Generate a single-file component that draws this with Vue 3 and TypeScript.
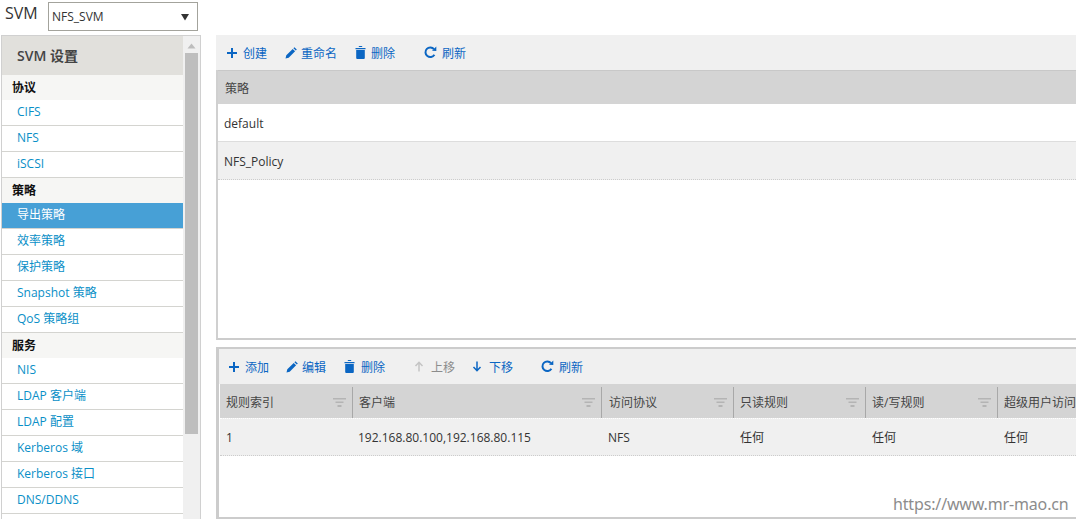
<script setup lang="ts">
type NavRow = { label: string; kind: 'group' | 'item' | 'active' }
const nav: NavRow[] = [
  { label: '协议', kind: 'group' },
  { label: 'CIFS', kind: 'item' },
  { label: 'NFS', kind: 'item' },
  { label: 'iSCSI', kind: 'item' },
  { label: '策略', kind: 'group' },
  { label: '导出策略', kind: 'active' },
  { label: '效率策略', kind: 'item' },
  { label: '保护策略', kind: 'item' },
  { label: 'Snapshot 策略', kind: 'item' },
  { label: 'QoS 策略组', kind: 'item' },
  { label: '服务', kind: 'group' },
  { label: 'NIS', kind: 'item' },
  { label: 'LDAP 客户端', kind: 'item' },
  { label: 'LDAP 配置', kind: 'item' },
  { label: 'Kerberos 域', kind: 'item' },
  { label: 'Kerberos 接口', kind: 'item' },
  { label: 'DNS/DDNS', kind: 'item' },
]
const columns = [
  { title: '规则索引', cell: '1', width: 133, filter: true },
  { title: '客户端', cell: '192.168.80.100,192.168.80.115', width: 249, filter: true },
  { title: '访问协议', cell: 'NFS', width: 132, filter: true },
  { title: '只读规则', cell: '任何', width: 132, filter: true },
  { title: '读/写规则', cell: '任何', width: 132, filter: true },
  { title: '超级用户访问', cell: '任何', width: 132, filter: false },
]
</script>

<template>
  <div class="page">
    <div class="svm-bar">
      <span class="svm-label">SVM</span>
      <div class="select">
        <span>NFS_SVM</span>
        <svg width="10" height="8" viewBox="0 0 10 8"><path d="M1 1h8L5 7.500z" fill="#333" /></svg>
      </div>
    </div>
    <div class="main">
      <aside class="sidebar">
        <div class="nav">
          <div class="nav-head">SVM 设置</div>
          <div v-for="row in nav" :key="row.label" :class="['nav-row', row.kind]">{{ row.label }}</div>
        </div>
        <div class="scrollbar">
          <svg class="scroll-up" width="9" height="6" viewBox="0 0 9 6"><path d="M4.500 0.500 8.500 5.500h-8z" fill="#bdbdbd" /></svg>
          <div class="thumb"></div>
        </div>
      </aside>
      <div class="content">
        <section class="panel top-panel">
          <div class="toolbar top-toolbar">
            <button class="tool t-create"><svg width="12" height="12" viewBox="0 0 12 12"><path d="M6 1v10M1 6h10" class="st" /></svg>创建</button>
            <button class="tool t-rename"><svg width="12" height="12" viewBox="0 0 12 12"><path d="M0.500 11.500l.8-3.200 6.400-6.400 2.400 2.400-6.400 6.400zM8.400 1.200l1-1 2.400 2.400-1 1z" class="fl" /></svg>重命名</button>
            <button class="tool t-del"><svg width="11" height="13" viewBox="0 0 11 13"><path d="M0.500 2h10v1.200h-10zM3.500 1l.7-1h2.600l.7 1zM1.200 4h8.600v8a1 1 0 0 1-1 1H2.200a1 1 0 0 1-1-1z" class="fl" /></svg>删除</button>
            <button class="tool t-refresh"><svg width="14" height="13" viewBox="0 0 14 13"><path d="M10.400 8.700A4.800 4.800 0 1 1 10 3.200" class="st round" /><path d="M8 4.700 12.300 5V.6z" class="fl" /></svg>刷新</button>
          </div>
          <div class="policy-head">策略</div>
          <div class="policy-row first">default</div>
          <div class="policy-row second">NFS_Policy</div>
        </section>
        <section class="panel bottom-panel">
          <div class="toolbar bottom-toolbar">
            <button class="tool t-add"><svg width="12" height="12" viewBox="0 0 12 12"><path d="M6 1v10M1 6h10" class="st" /></svg>添加</button>
            <button class="tool t-edit"><svg width="12" height="12" viewBox="0 0 12 12"><path d="M0.500 11.500l.8-3.200 6.400-6.400 2.400 2.400-6.400 6.400zM8.400 1.200l1-1 2.400 2.400-1 1z" class="fl" /></svg>编辑</button>
            <button class="tool t-del2"><svg width="11" height="13" viewBox="0 0 11 13"><path d="M0.500 2h10v1.200h-10zM3.500 1l.7-1h2.600l.7 1zM1.200 4h8.600v8a1 1 0 0 1-1 1H2.200a1 1 0 0 1-1-1z" class="fl" /></svg>删除</button>
            <button class="tool t-up"><svg width="10" height="11" viewBox="0 0 10 11"><path d="M5 10.500V1.500M1.500 5 5 1.300 8.500 5" class="st thin" /></svg>上移</button>
            <button class="tool t-down"><svg width="10" height="11" viewBox="0 0 10 11"><path d="M5 .5v9M1.500 6 5 9.700 8.500 6" class="st thin" /></svg>下移</button>
            <button class="tool t-refresh"><svg width="14" height="13" viewBox="0 0 14 13"><path d="M10.400 8.700A4.800 4.800 0 1 1 10 3.200" class="st round" /><path d="M8 4.700 12.300 5V.6z" class="fl" /></svg>刷新</button>
          </div>
          <div class="rule-grid">
            <div class="grid-row head">
              <div v-for="c in columns" :key="c.title" class="th" :style="{ width: c.width + 'px' }">
                <span class="th-title">{{ c.title }}</span>
                <svg v-if="c.filter" class="filter" width="13" height="9" viewBox="0 0 13 9"><path d="M0 0h13v1.500H0zM2.500 3.500h8V5h-8zM4.500 7h4v2h-4z" fill="#b4b4b4" /></svg>
              </div>
            </div>
            <div class="grid-row body">
              <div v-for="c in columns" :key="c.title" class="td" :style="{ width: c.width + 'px' }">{{ c.cell }}</div>
            </div>
          </div>
        </section>
      </div>
    </div>
    <div class="watermark">https://www.mr-mao.cn</div>
  </div>
</template>

<style>
html, body { margin: 0; padding: 0; background: #fff; overflow: hidden; }
</style>

<style scoped>
.page {
  position: relative;
  width: 1076px;
  height: 519px;
  overflow: hidden;
  background: #fff;
  font-family: "Open Sans", "Noto Sans CJK SC", sans-serif;
  font-size: 12px;
  color: #333;
}
.svm-bar { display: flex; align-items: flex-start; height: 35px; }
.svm-label { margin: 3px 0 0 5px; width: 43px; font-size: 16px; line-height: 20px; color: #333; }
.select {
  box-sizing: border-box;
  width: 150px;
  height: 29px;
  margin-top: 2px;
  padding: 0 7px 0 3px;
  border: 1px solid #a3a39c;
  display: flex;
  align-items: center;
  justify-content: space-between;
  font-size: 12px;
}
.main { display: flex; height: 484px; }
.sidebar {
  box-sizing: border-box;
  width: 200px;
  margin-left: 1px;
  height: 484px;
  border: 1px solid #d0d0d0;
  border-bottom: 0;
  display: flex;
  overflow: hidden;
}
.nav { width: 181px; flex: none; }
.nav-head {
  height: 39px;
  box-sizing: border-box;
  padding-left: 15px;
  background: #e1e0dc;
  font-size: 14px;
  font-weight: 600;
  line-height: 39px;
  color: #444;
}
.nav-row { box-sizing: border-box; height: 26px; line-height: 24px; white-space: nowrap; }
.nav-row.group {
  background: #f6f6f4;
  padding-left: 10px;
  color: #111;
  font-weight: 700;
  height: 25px;
  line-height: 26px;
}
.nav-row.item {
  padding-left: 15px;
  color: #0a8fc7;
  border-bottom: 1px solid #d4d4d0;
  background: #fff;
}
.nav-row.active {
  padding-left: 15px;
  color: #fff;
  background: #47a0d6;
  border-bottom: 1px solid #d4d4d0;
}
.scrollbar {
  flex: 1;
  background: #f0f0f0;
  position: relative;
  display: flex;
  flex-direction: column;
  align-items: center;
}
.scroll-up { margin-top: 7px; flex: none; }
.thumb { width: 13px; height: 381px; margin-top: 4px; background: #bebebe; flex: none; }
.content { margin-left: 15px; width: 860px; display: flex; flex-direction: column; }
.panel { box-sizing: border-box; }
.top-panel {
  height: 305px;
  border-bottom: 2px solid #ccc;
  border-left: 2px solid #d0d0d0;
}
.toolbar { background: #f0f0f0; position: relative; display: flex; align-items: center; }
.top-toolbar { height: 35px; margin-left: -2px; padding-left: 10px; }
.bottom-toolbar { height: 35px; padding-left: 9px; }
.tool {
  all: unset;
  box-sizing: border-box;
  flex: none;
  display: inline-flex;
  align-items: center;
  gap: 5px;
  font-size: 12px;
  color: #0b66c3;
  white-space: nowrap;
  cursor: pointer;
}
.t-create { width: 59px; }
.t-rename { width: 70px; gap: 4px; }
.t-del { width: 69px; }
.t-refresh { gap: 4px; }
.t-add { width: 58px; }
.t-edit { width: 58px; gap: 4px; }
.t-del2 { width: 70px; gap: 6px; }
.t-up { width: 58px; gap: 7px; color: #8c8c8c; }
.t-down { width: 69px; gap: 7px; }
.st { fill: none; stroke: #0b66c3; stroke-width: 2; }
.st.thin { stroke-width: 1.500; }
.st.round { stroke-width: 2; }
.t-up .st.thin { stroke: #c4c4c4; }
.fl { fill: #0b66c3; }
.policy-head {
  height: 34px;
  background: #d4d4d4;
  border-top: 1px solid #c8c8c8;
  box-sizing: border-box;
  line-height: 36px;
  padding-left: 7px;
  color: #444;
}
.policy-row { padding-left: 6px; color: #333; }
.policy-row.first { height: 38px; line-height: 40px; background: #fff; border-bottom: 1px solid #ddd; box-sizing: border-box; }
.policy-row.second { height: 38px; line-height: 40px; background: #f0f0f0; border-bottom: 1px dotted #ccc; box-sizing: border-box; }
.bottom-panel {
  margin-top: 7px;
  height: 172px;
  border-top: 2px solid #ccc;
  border-left: 3px solid #ccc;
  border-bottom: 2px solid #ccc;
}
.rule-grid { margin-left: 1px; }
.grid-row { display: flex; width: 1000px; }
.grid-row.head { height: 34px; background: #d4d4d4; border-top: 1px solid #d4d4d4; box-sizing: border-box; align-items: center; }
.grid-row.body { height: 38px; background: #f0f0f0; border-top: 1px dotted #fff; border-bottom: 1px dotted #ccc; box-sizing: border-box; align-items: center; }
.th {
  box-sizing: border-box;
  flex: none;
  height: 31px;
  margin-top: 1px;
  padding: 0 6px 0 6px;
  border-right: 1px solid #a8a8a8;
  display: flex;
  align-items: center;
  justify-content: space-between;
  color: #444;
}
.th:last-child { border-right: 0; }
.th:nth-child(3) { padding-left: 7px; }
.th-title { white-space: nowrap; }
.filter { margin-top: 1px; }
.td { box-sizing: border-box; flex: none; padding-left: 6px; color: #333; white-space: nowrap; }
.td:nth-child(2) { padding-left: 5px; }
.watermark {
  position: absolute;
  left: 893px;
  top: 492px;
  font-family: "Noto Sans", sans-serif;
  font-size: 16px;
  letter-spacing: -0.15px;
  line-height: 24px;
  color: #8c8c8c;
  white-space: nowrap;
}
</style>
